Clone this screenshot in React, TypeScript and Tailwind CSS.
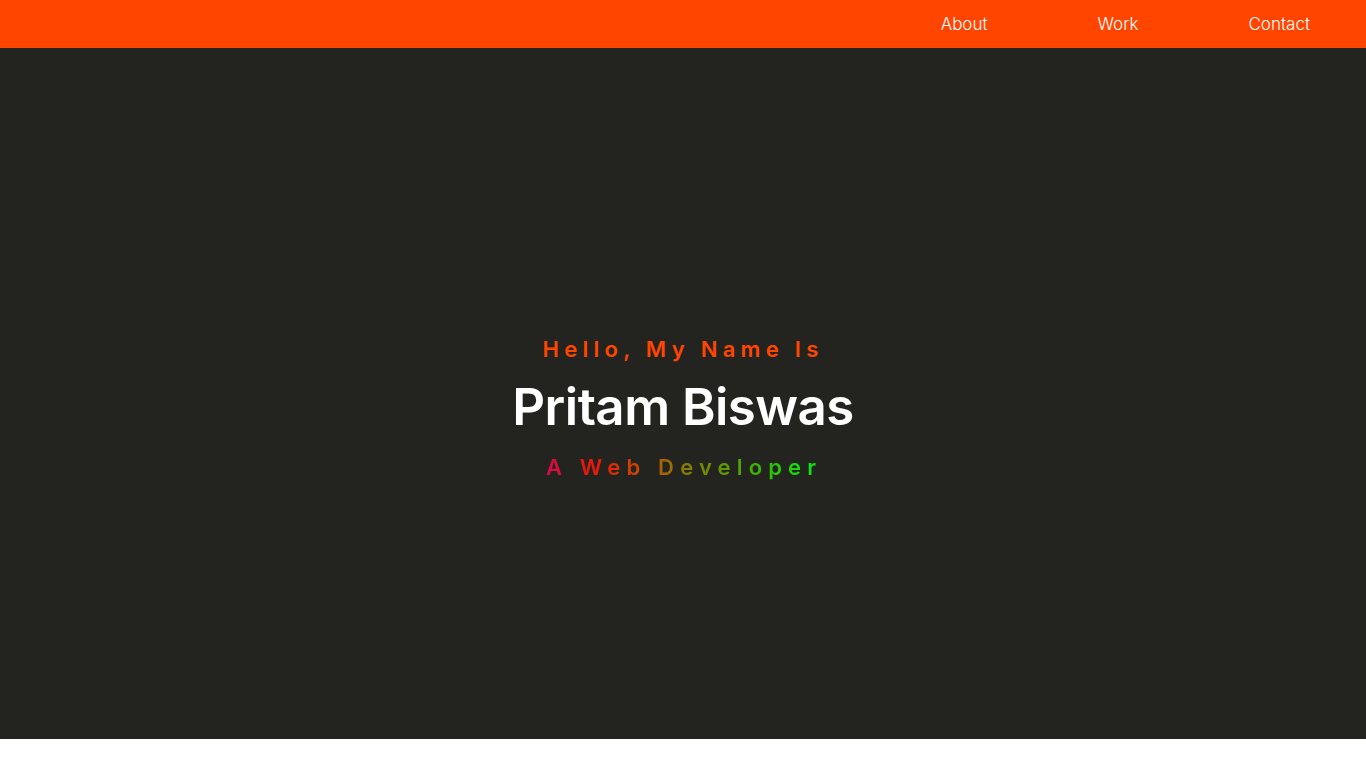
import React from 'react';

const links = ['About', 'Work', 'Contact'];

export default function App() {
  return (
    <div className="min-h-screen bg-white font-['Inter','Open_Sans',sans-serif]">
      {/* Top bar */}
      <header className="h-12 bg-[#ff4500] flex items-center justify-end gap-[110px] pr-[56px]">
        {links.map((l) => (
          <a key={l} href="#" className="text-white text-[17px] font-light leading-none">
            {l}
          </a>
        ))}
      </header>

      {/* Hero */}
      <section className="h-[691px] bg-[#23241f] flex flex-col items-center pt-[287px]">
        <p className="text-[#ff4500] text-[22px] font-semibold tracking-[0.24em] leading-[28px]">
          Hello, My Name Is
        </p>
        <h1 className="mt-[15px] text-white text-[51px] font-semibold leading-[58px] tracking-[-0.01em]">
          Pritam Biswas
        </h1>
        <p className="mt-[17px] text-[22px] font-semibold tracking-[0.28em] leading-[28px] pl-[0.1em] bg-[linear-gradient(to_right,#d40a4a_0%,#ec1c00_20%,#c84a08_35%,#8a7a00_50%,#40b000_75%,#00f010_100%)] bg-clip-text text-transparent">
          A Web Developer
        </p>
      </section>
    </div>
  );
}
